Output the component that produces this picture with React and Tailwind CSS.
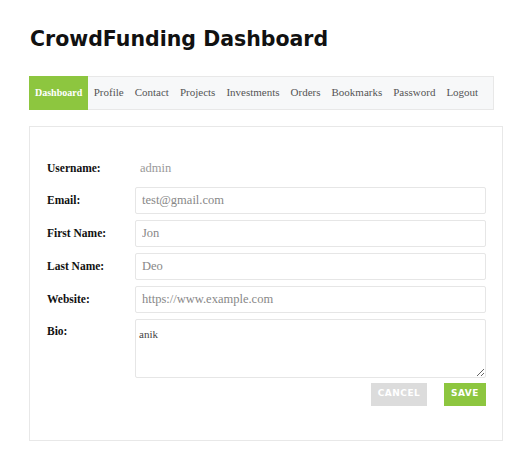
import { useState } from 'react';

const tabs = ['Dashboard', 'Profile', 'Contact', 'Projects', 'Investments', 'Orders', 'Bookmarks', 'Password', 'Logout'];

export default function App() {
  const [form, setForm] = useState({
    email: 'test@gmail.com',
    firstName: 'Jon',
    lastName: 'Deo',
    website: 'https://www.example.com',
    bio: 'anik',
  });

  const handleChange = (e) => {
    setForm({ ...form, [e.target.name]: e.target.value });
  };

  const inputClass =
    "w-[351px] h-[27px] px-[6px] border border-[#e6e6e6] rounded-[2px] text-[12.5px] text-[#888] outline-none font-['Liberation_Serif',serif]";

  return (
    <div className="min-h-screen bg-white font-['Liberation_Serif',serif]">
      <div className="pl-[29px] pr-[29px] pt-[29px]">
        <h1 className="text-[20.5px] font-bold text-[#111] leading-none pl-[1px] font-['DejaVu_Sans',sans-serif]">
          CrowdFunding Dashboard
        </h1>

        {/* Nav */}
        <div className="mt-[26px] w-[465px] h-[34px] flex items-stretch bg-[#f7f8f9] border border-[#e8e8e8]">
          {tabs.map((tab, i) => (
            <div
              key={tab}
              className={
                i === 0
                  ? 'flex items-center px-[6px] bg-[#8dc63f] text-white font-bold text-[10px] -my-px -ml-px'
                  : 'flex items-center px-[5.5px] text-[#555] text-[11px]'
              }
            >
              {tab}
            </div>
          ))}
        </div>

        {/* Card */}
        <div className="mt-[16px] w-[474px] h-[315px] border border-[#e8e8e8] pl-[17px] pt-[32px]">
          <div className="flex items-center h-[20px]">
            <div className="w-[88px] text-[11.5px] font-bold text-[#111]">Username:</div>
            <div className="pl-[5px] text-[12.5px] text-[#999]">admin</div>
          </div>

          <div className="mt-[8px] flex flex-col gap-[6px]">
            {[
              ['Email:', 'email'],
              ['First Name:', 'firstName'],
              ['Last Name:', 'lastName'],
              ['Website:', 'website'],
            ].map(([label, name]) => (
              <div key={name} className="flex items-start">
                <label className="w-[88px] pt-[5px] text-[11.5px] font-bold text-[#111]">{label}</label>
                <input name={name} value={form[name]} onChange={handleChange} className={inputClass} />
              </div>
            ))}
            <div className="flex items-start">
              <label className="w-[88px] pt-[4px] text-[11.5px] font-bold text-[#111]">Bio:</label>
              <textarea
                name="bio"
                value={form.bio}
                onChange={handleChange}
                className="w-[351px] h-[59px] px-[3px] py-[6px] border border-[#e6e6e6] rounded-[2px] text-[11px] text-[#444] outline-none font-['Liberation_Serif',serif]"
              />
            </div>
          </div>

          <div className="mt-[5px] w-[439px] flex justify-end gap-[17px]">
            <button className="w-[56px] h-[23px] bg-[#dcdcdc] text-white text-[9px] font-bold tracking-[0.5px] font-['DejaVu_Sans',sans-serif]">
              CANCEL
            </button>
            <button className="w-[42px] h-[23px] bg-[#8dc63f] text-white text-[9px] font-bold tracking-[0.5px] font-['DejaVu_Sans',sans-serif]">
              SAVE
            </button>
          </div>
        </div>
      </div>
    </div>
  );
}
